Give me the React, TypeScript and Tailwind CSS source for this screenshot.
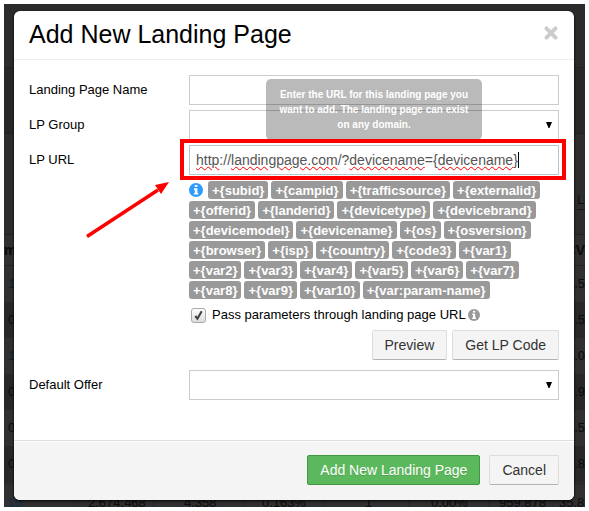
import { ReactNode } from "react"

const tokens = [
  ["subid", "campid", "trafficsource", "externalid"],
  ["offerid", "landerid", "devicetype", "devicebrand"],
  ["devicemodel", "devicename", "os", "osversion"],
  ["browser", "isp", "country", "code3", "var1"],
  ["var2", "var3", "var4", "var5", "var6", "var7"],
  ["var8", "var9", "var10", "var:param-name"],
]

const reportRows = [
  { first: "1", last: "6.5", link: true },
  { first: "0", last: "6.5", link: false },
  { first: "1", last: "1.0", link: true },
  { first: "0", last: "6.9", link: false },
  { first: "0", last: "7.5", link: false },
  { first: "0", last: "3.8", link: false },
]

function InfoIcon({ className }: { className: string }) {
  return (
    <svg viewBox="0 0 14 14" className={className} aria-hidden="true">
      <circle cx="7" cy="7" r="7" fill="currentColor" />
      <path
        d="M5.8 2h2.6v2H5.8zM5 5.3h3.4v4.6h.9v1.7H4.9V9.9h.9V7H5z"
        fill="#fff"
      />
    </svg>
  )
}

function FieldRow({
  id,
  label,
  children,
}: {
  id: string
  label: string
  children: ReactNode
}) {
  return (
    <div className="flex">
      <label htmlFor={id} className="w-40 shrink-0 pt-[5px] leading-5">
        {label}
      </label>
      <div className="min-w-0 flex-1">{children}</div>
    </div>
  )
}

function EmptySelect({ id }: { id: string }) {
  return (
    <div className="relative">
      <select
        id={id}
        className="block h-[30px] w-full appearance-none border border-[#ccc] bg-white px-2"
      />
      <svg
        viewBox="0 0 6 6"
        className="pointer-events-none absolute top-3 right-[7px] h-1.5 w-1.5"
        aria-hidden="true"
      >
        <path d="M0 0h6L3.5 6h-1z" />
      </svg>
    </div>
  )
}

function Misspelled({ children }: { children: ReactNode }) {
  return (
    <span className="underline decoration-[#f00] decoration-wavy decoration-1 underline-offset-1">
      {children}
    </span>
  )
}

// Dimmed report page behind the dialog
function ReportBackdrop() {
  return (
    <div
      className="absolute inset-0 flex flex-col overflow-hidden bg-[#2b2b2b] text-[13px] text-[#0b0b0b]"
      aria-hidden="true"
    >
      <div className="h-16 shrink-0 border-b border-[#222]" />
      <div className="h-[66px] shrink-0 border-b border-[#222] bg-[#282828]" />
      <div className="flex h-[101px] shrink-0 items-end justify-end border-b border-[#222] bg-[#2d2d2d] pb-6 text-[#111]">
        <span className="w-2 border-b border-[#161616]">L</span>
      </div>
      <div className="flex h-[31px] shrink-0 items-center justify-between border-b border-[#222] bg-[#303030] text-sm font-bold">
        <span>m</span>
        <span>CV</span>
      </div>
      {reportRows.map((row, i) => (
        <div
          key={i}
          className="flex h-9 shrink-0 items-center justify-between pl-1 odd:bg-[#303030] even:bg-[#282828]"
        >
          <span className={row.link ? "text-[#0b2035]" : ""}>{row.first}</span>
          <span>{row.last}</span>
        </div>
      ))}
      <div className="mt-[3px] flex flex-1 bg-[#303030] leading-4 *:pt-2.5">
        <span className="w-[73px] pl-[3px] text-[#0d2f4d]">15</span>
        <span className="w-[76px] border-l border-[#292929] pl-2.5">2,674,468</span>
        <span className="w-[91px] border-l border-[#292929] pl-[30px]">4,358</span>
        <span className="w-20 border-l border-[#292929] pl-[17px]">0.163%</span>
        <span className="w-[84px] border-l border-[#292929] pl-10">1</span>
        <span className="flex-1 border-l border-[#292929] pl-[22px]">0.00%</span>
        <span className="w-[65px] border-l border-[#292929] pl-2.5">959,878</span>
        <span className="w-8 border-l border-[#292929] pl-[5px]">35.8</span>
      </div>
    </div>
  )
}

export default function App() {
  return (
    <main className="bg-white p-1 font-['Liberation_Sans',Arial,sans-serif]">
      <div className="relative py-[7px] pr-[11px] pl-2.5">
        <ReportBackdrop />
        <section
          role="dialog"
          aria-labelledby="dialog-title"
          className="relative rounded-md bg-white text-[13px] text-black shadow-[0_1px_3px_#000]"
        >
          <header className="flex items-start justify-between border-b border-[#eee] px-[15px] pt-[7px] pb-[9px]">
            <h1 id="dialog-title" className="text-[25px] leading-8">
              Add New Landing Page
            </h1>
            <button type="button" aria-label="Close" className="pt-[7px] text-[#ccc]">
              <svg viewBox="0 0 14 14" className="h-4 w-4" aria-hidden="true">
                <path
                  d="M3 3l8 8M11 3l-8 8"
                  stroke="currentColor"
                  strokeWidth="3.5"
                  strokeLinecap="round"
                />
              </svg>
            </button>
          </header>

          <form className="flex flex-col gap-[5px] px-[15px] pt-[15px] pb-10">
            <FieldRow id="lp-name" label="Landing Page Name">
              <input
                id="lp-name"
                type="text"
                className="block h-[30px] w-full border border-[#ccc] bg-white px-1.5 text-sm"
              />
            </FieldRow>
            <FieldRow id="lp-group" label="LP Group">
              <EmptySelect id="lp-group" />
            </FieldRow>
            <FieldRow id="lp-url" label="LP URL">
              <div className="relative">
                <div
                  role="tooltip"
                  className="absolute bottom-[35px] left-[77px] w-[216px] rounded-[5px] bg-black/27 px-2.5 pt-2 pb-2 text-center text-[10px] leading-[15px] font-bold text-white"
                >
                  Enter the URL for this landing page you want to add. The landing
                  page can exist on any domain.
                </div>
                <input
                  id="lp-url"
                  type="text"
                  spellCheck={false}
                  defaultValue="http://landingpage.com/?devicename={devicename}"
                  className="block h-[30px] w-full border border-[#b6c5d0] bg-white px-1.5 text-sm text-[#555] outline-none"
                />
                {/* Spelling marks and the text cursor */}
                <div
                  className="pointer-events-none absolute inset-0 flex items-center border border-transparent px-1.5 text-sm leading-4 whitespace-pre text-transparent"
                  aria-hidden="true"
                >
                  <Misspelled>http</Misspelled>
                  <span>://</span>
                  <Misspelled>landingpage.com</Misspelled>
                  <span>/?</span>
                  <Misspelled>devicename</Misspelled>
                  <span>={"{"}</span>
                  <Misspelled>devicename</Misspelled>
                  <span className="border-r border-black">{"}"}</span>
                </div>
                <div className="pointer-events-none absolute -top-1.5 -right-[7px] -bottom-[5px] -left-[9px] border-4 border-[#f00]" />
                <svg
                  viewBox="0 0 84 56"
                  className="pointer-events-none absolute top-[37px] -left-[104px] h-14 w-[84px]"
                  aria-hidden="true"
                >
                  <path d="M2 54.500L73 8" stroke="#f00" strokeWidth="3.500" />
                  <path d="M84 0L76 12L70 3z" fill="#f00" />
                </svg>
              </div>

              <div className="mt-1.5 flex flex-col gap-0.5">
                {tokens.map((line, i) => (
                  <div key={i} className="flex gap-[3px]">
                    {i === 0 && (
                      <InfoIcon className="mt-0.5 mr-0.5 h-3.5 w-3.5 shrink-0 text-[#2e9bff]" />
                    )}
                    {line.map((token) => (
                      <button
                        key={token}
                        type="button"
                        className="h-[18px] rounded-[3px] bg-[#999] px-1 text-[13px] leading-[17px] font-bold whitespace-nowrap text-white"
                      >
                        +{"{"}
                        {token}
                        {"}"}
                      </button>
                    ))}
                  </div>
                ))}
              </div>

              <div className="mt-1.5 flex h-5 items-center pl-0.5">
                <input
                  id="pass-params"
                  type="checkbox"
                  defaultChecked
                  className="peer h-[15px] w-[15px] appearance-none rounded-[3px] border border-[#aaa] bg-linear-to-b from-white to-[#ddd]"
                />
                <svg
                  viewBox="0 0 14 14"
                  className="pointer-events-none -ml-[15px] hidden h-[15px] w-[15px] peer-checked:block"
                  aria-hidden="true"
                >
                  <path
                    d="M4 7.500l2 2.500 4-7"
                    fill="none"
                    stroke="#444"
                    strokeWidth="2"
                  />
                </svg>
                <label htmlFor="pass-params" className="ml-1.5">
                  Pass parameters through landing page URL
                </label>
                <InfoIcon className="ml-0.5 h-3 w-3 text-[#999]" />
              </div>

              <div className="mt-[5px] mb-[5px] flex justify-end gap-[5px] text-sm text-[#333]">
                <button
                  type="button"
                  className="h-[30px] rounded-[2px] border border-[#ddd] border-b-[#b3b3b3] bg-[#f4f4f4] px-3"
                >
                  Preview
                </button>
                <button
                  type="button"
                  className="h-[30px] rounded-[2px] border border-[#ddd] border-b-[#b3b3b3] bg-[#f4f4f4] px-3"
                >
                  Get LP Code
                </button>
              </div>
            </FieldRow>
            <FieldRow id="default-offer" label="Default Offer">
              <EmptySelect id="default-offer" />
            </FieldRow>
          </form>

          <footer className="flex justify-end gap-[9px] rounded-b-md border-t border-[#ddd] bg-[#f4f4f4] px-[15px] pt-3.5 pb-[15px] text-sm shadow-[inset_0_1px_0_#fff]">
            <button
              type="button"
              className="h-[30px] rounded-[2px] border border-[#419641] bg-[#5cb85c] px-3 text-white text-shadow-2xs"
            >
              Add New Landing Page
            </button>
            <button
              type="button"
              className="h-[30px] rounded-[2px] border border-[#ddd] border-b-[#b3b3b3] bg-[#f4f4f4] px-3 text-[#333]"
            >
              Cancel
            </button>
          </footer>
        </section>
      </div>
    </main>
  )
}
